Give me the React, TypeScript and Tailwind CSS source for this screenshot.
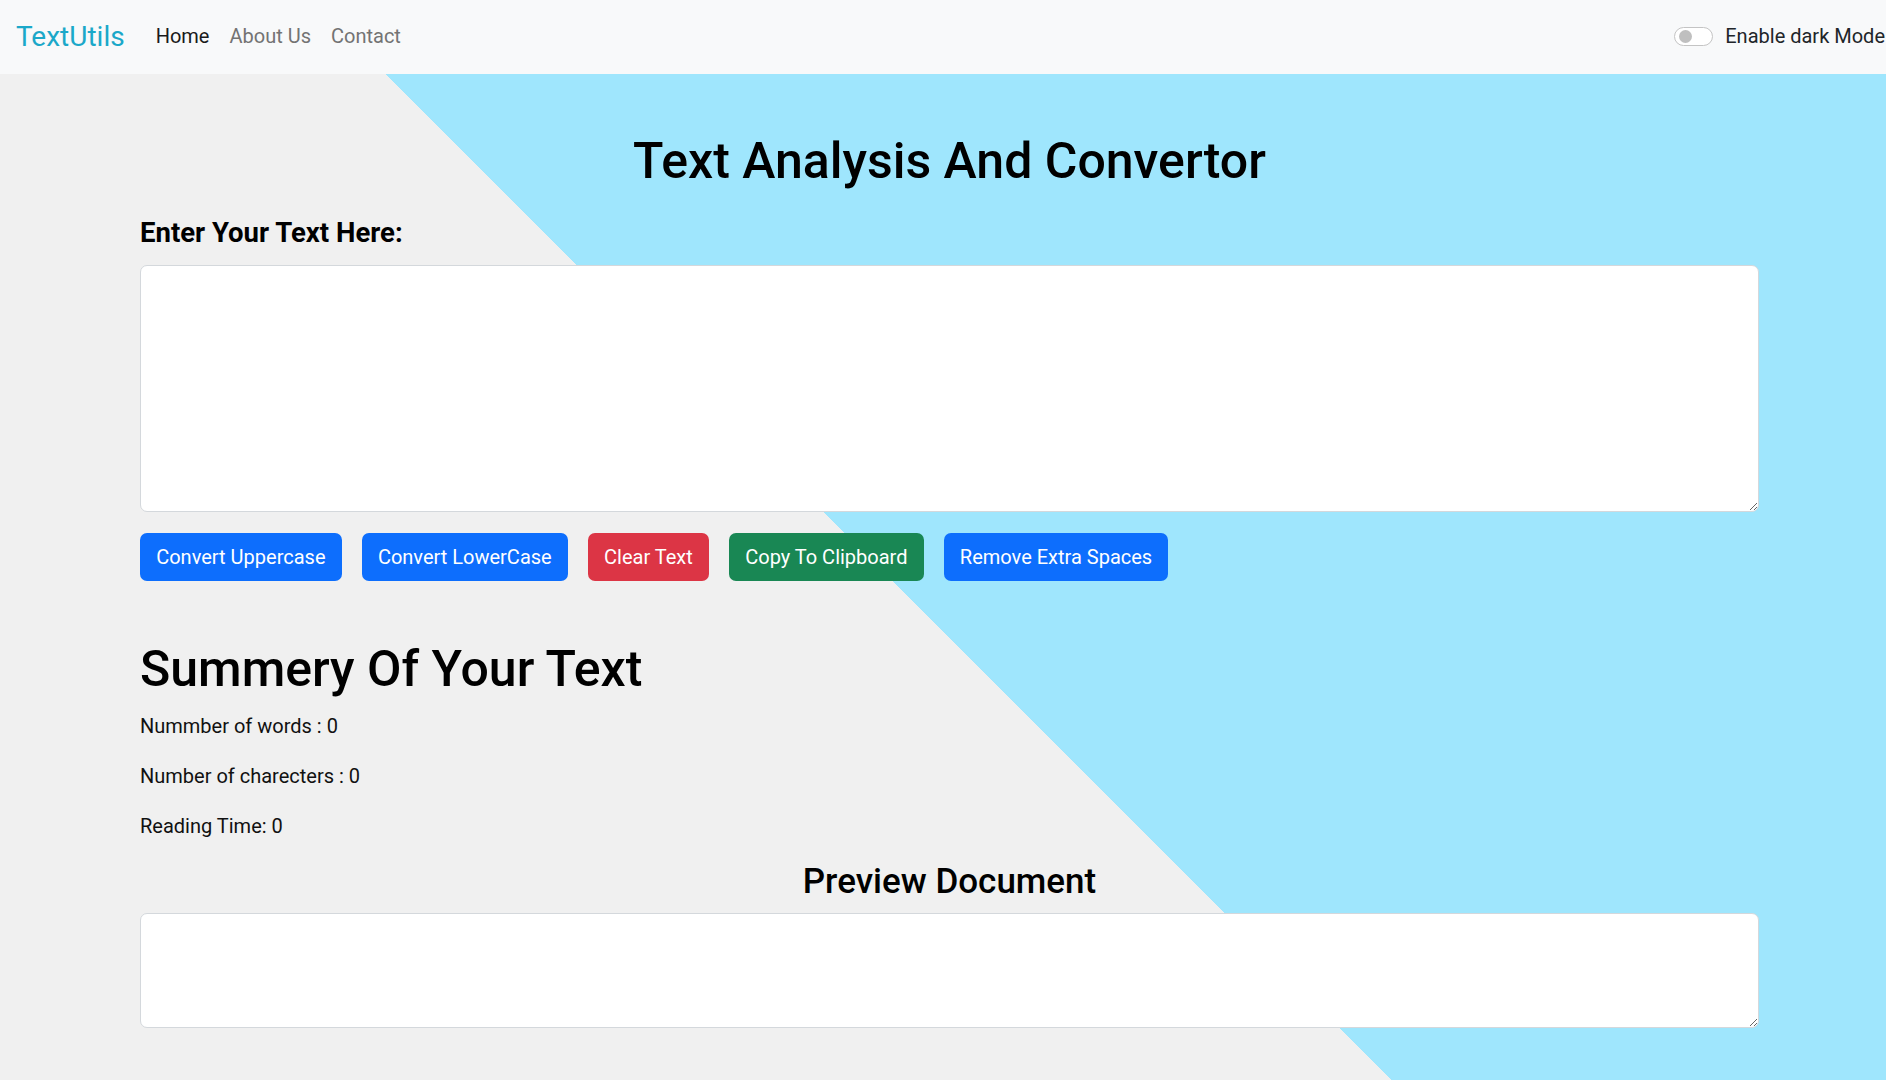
import React from "react";

const buttons = [
  { label: "Convert Uppercase", cls: "bg-[#0d6efd]" },
  { label: "Convert LowerCase", cls: "bg-[#0d6efd]" },
  { label: "Clear Text", cls: "bg-[#dc3545]" },
  { label: "Copy To Clipboard", cls: "bg-[#198754]" },
  { label: "Remove Extra Spaces", cls: "bg-[#0d6efd]" },
];

export default function App() {
  return (
    <div className="h-screen flex flex-col font-['Roboto',sans-serif] text-[#111]">
      {/* Navbar */}
      <nav className="h-[74px] shrink-0 bg-[#f8f9fa] flex items-center pl-[16px] pr-[1px] pb-[2px]">
        <a className="text-[28px] leading-[41px] text-[#1ba8c9] mr-[21px]">TextUtils</a>
        <ul className="flex items-center text-[20px] leading-[30px]">
          <li className="px-[10px] text-[#1a1a1a]">Home</li>
          <li className="px-[10px] text-[#737373]">About Us</li>
          <li className="px-[10px] text-[#737373]">Contact</li>
        </ul>
        <div className="ml-auto flex items-center gap-[12px]">
          <span className="w-[39px] h-[19px] rounded-full border border-[#c4c4c4] bg-white flex items-center pl-[4px]">
            <span className="w-[13px] h-[13px] rounded-full bg-[#bfbfbf]" />
          </span>
          <span className="text-[20px] leading-[30px] text-[#212529]">Enable dark Mode</span>
        </div>
      </nav>

      {/* Main */}
      <main className="flex-1 bg-[linear-gradient(45deg,#f0f0f0_48.13%,#9fe6fd_48.13%)]">
        <div className="ml-[140px] w-[1619px] flex flex-col">
          <h1 className="mt-[57px] text-[50px] leading-[60px] font-medium text-center text-black">
            Text Analysis And Convertor
          </h1>
          <label className="mt-[26px] text-[27.5px] leading-[32px] font-bold text-black">
            Enter Your Text Here:
          </label>
          <textarea className="mt-[16px] h-[247px] w-full bg-white border border-[#d4d8dc] rounded-[7px] outline-none" />

          <div className="mt-[21px] flex gap-[20px]">
            {buttons.map((b) => (
              <button
                key={b.label}
                className={`h-[48px] px-[16.2px] rounded-[7px] text-white text-[20px] leading-[30px] ${b.cls}`}
              >
                {b.label}
              </button>
            ))}
          </div>

          <h1 className="mt-[58px] text-[50px] leading-[60px] font-medium text-black">
            Summery Of Your Text
          </h1>
          <div className="mt-[12px] text-[20px] leading-[30px]">
            <p className="mb-[20px]">Nummber of words : 0</p>
            <p className="mb-[20px]">Number of charecters : 0</p>
            <p className="mb-[20px]">Reading Time: 0</p>
          </div>

          <h2 className="text-[35px] leading-[42px] font-medium text-center text-black">
            Preview Document
          </h2>
          <textarea className="mt-[10px] h-[115px] w-full bg-white border border-[#d4d8dc] rounded-[7px] outline-none" />
        </div>
      </main>
    </div>
  );
}
